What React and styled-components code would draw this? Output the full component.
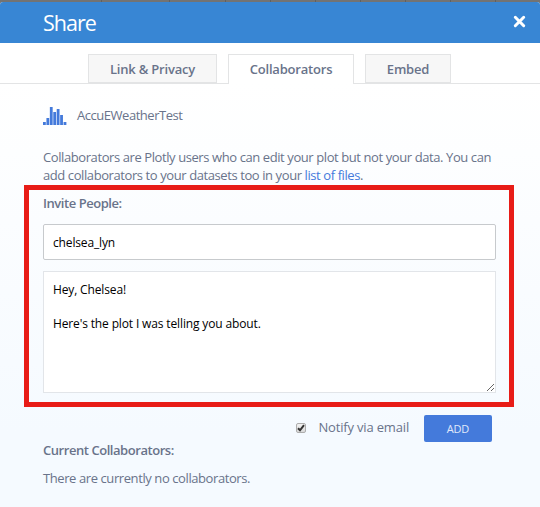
import React from 'react';
import styled, { createGlobalStyle } from 'styled-components';

const GlobalStyle = createGlobalStyle`
  * { box-sizing: border-box; }
  body { margin: 0; background: #737373; font-family: "Open Sans", sans-serif; }
`;

const Page = styled.div`
  width: 540px;
  height: 507px;
  overflow: hidden;
  padding-top: 2px;
  background:
    linear-gradient(90deg, transparent 101px, #606060 101px 102px, transparent 102px 169px, #606060 169px 170px, transparent 170px),
    repeating-linear-gradient(90deg, #606060 0 1px, transparent 1px 45px) 225px 0 / 315px 100% no-repeat,
    #737373;
`;

const Dialog = styled.section`
  height: 505px;
  border-radius: 3px 3px 0 0;
  overflow: hidden;
  background: linear-gradient(#fff 80px, #f5faff 430px);
  color: #69738a;
  font-size: 13px;
`;

const Header = styled.header`
  display: flex;
  justify-content: space-between;
  height: 41px;
  padding: 0 14px 0 43px;
  background: #3886d4;
  color: #fff;
`;

const Title = styled.h1`
  margin: 0;
  font-size: 21.5px;
  font-weight: 400;
  line-height: 41px;
  letter-spacing: -1px;
`;

const CloseButton = styled.button`
  display: flex;
  border: 0;
  padding: 13px 0 0;
  background: none;
  color: inherit;
`;

const TabBar = styled.nav`
  display: flex;
  gap: 11px;
  height: 41px;
  padding: 11px 0 0 88px;
  background: #fff;
  border-bottom: 1px solid #e3e4e5;
`;

const Tab = styled.button`
  width: ${(p) => p.$width}px;
  height: ${(p) => (p.$active ? 30 : 29)}px;
  padding: 0 0 ${(p) => (p.$active ? 1 : 0)}px;
  border: 1px solid #e3e4e5;
  border-bottom: ${(p) => (p.$active ? '0' : '1px solid #e3e4e5')};
  background: ${(p) => (p.$active ? '#fff' : '#f7f7f7')};
  color: #69738a;
  font: 600 13px/26px "Open Sans", sans-serif;
  letter-spacing: -0.2px;
`;

const Content = styled.main`
  padding: 22px 44px 0 43px;
`;

const PlotName = styled.div`
  display: flex;
  gap: 10px;
  height: 20px;
  line-height: 19px;
  font-weight: 370;
  letter-spacing: -0.47px;
`;

const Text = styled.p`
  margin: ${(p) => p.$top || 0}px -10px 0 0;
  font-weight: 370;
  line-height: 18px;
  white-space: nowrap;
  letter-spacing: -0.41px;
`;

const Link = styled.a`
  color: #447adb;
`;

const InviteBox = styled.div`
  margin: 1px -18px 0 -19px;
  height: 222px;
  border: 5px solid #e81c17;
  padding: 4px 13px 0 14px;
`;

const Label = styled.h2`
  margin: 0;
  font-size: 13px;
  font-weight: 600;
  line-height: 18px;
  letter-spacing: -0.45px;
`;

const NameInput = styled.input`
  display: block;
  width: 453px;
  height: 36px;
  margin: 12px 0 11px;
  padding: 1px 9px 0;
  border: 1px solid #c7cacd;
  border-radius: 2px;
  background: #fff;
  color: #000;
  font: 12px "Open Sans", sans-serif;
  letter-spacing: -0.15px;
  outline: 0;
`;

const Message = styled.textarea`
  display: block;
  width: 453px;
  height: 122px;
  padding: 9px;
  border: 1px solid #e2e5e9;
  background: #fff;
  color: #000;
  font: 12px/17px "Open Sans", sans-serif;
  letter-spacing: -0.14px;
  outline: 0;
`;

const Actions = styled.div`
  display: flex;
  justify-content: flex-end;
  height: 34px;
  padding: 8px 4px 0 0;
`;

const Notify = styled.label`
  display: flex;
  gap: 12px;
  margin-right: 15px;
  line-height: 24px;
  letter-spacing: -0.17px;
`;

const Check = styled.span`
  display: flex;
  width: 10px;
  height: 10px;
  margin-top: 8px;
  border: 1px solid #adadad;
  border-radius: 2px;
  background: linear-gradient(#f2f2f2, #dadada);
`;

const AddButton = styled.button`
  width: 68px;
  height: 27px;
  padding: 0;
  border: 0;
  border-radius: 2px;
  background: #447adb;
  color: #e0e9fa;
  font: 370 11px/25px "Open Sans", sans-serif;
  letter-spacing: -0.2px;
`;

const barHeights = [3, 7, 18, 13, 16, 10, 3];

function HistogramIcon() {
  return (
    <svg width="24" height="19" viewBox="0 0 24 19" fill="#447adb">
      {barHeights.map((h, i) => <rect key={i} x={i * 3.43} y={19 - h} width="2.8" height={h} />)}
    </svg>
  );
}

export default function App() {
  return (
    <Page>
      <GlobalStyle />
      <Dialog>
        <Header>
          <Title>Share</Title>
          <CloseButton aria-label="Close">
            <svg width="13" height="13" viewBox="0 0 13 13" stroke="currentColor" strokeWidth="3" strokeLinecap="round">
              <path d="M2.3 2.3 10.7 10.7M10.7 2.3 2.3 10.7" />
            </svg>
          </CloseButton>
        </Header>
        <TabBar>
          <Tab $width={129}>Link &amp; Privacy</Tab>
          <Tab $width={126} $active>Collaborators</Tab>
          <Tab $width={86}>Embed</Tab>
        </TabBar>
        <Content>
          <PlotName><HistogramIcon />AccuEWeatherTest</PlotName>
          <Text $top={22}>
            Collaborators are Plotly users who can edit your plot but not your data. You can<br />
            add collaborators to your datasets too in your <Link>list of files</Link>.
          </Text>
          <InviteBox>
            <Label>Invite People:</Label>
            <NameInput defaultValue="chelsea_lyn" />
            <Message spellCheck={false} defaultValue={"Hey, Chelsea!\n\nHere's the plot I was telling you about."} />
          </InviteBox>
          <Actions>
            <Notify>
              <Check>
                <svg width="8" height="8" viewBox="0 0 8 8" fill="none" stroke="#333" strokeWidth="2">
                  <path d="M1 4.3 3 6.3 7 1.2" />
                </svg>
              </Check>
              Notify via email
            </Notify>
            <AddButton>ADD</AddButton>
          </Actions>
          <Label>Current Collaborators:</Label>
          <Text $top={10}>There are currently no collaborators.</Text>
        </Content>
      </Dialog>
    </Page>
  );
}
